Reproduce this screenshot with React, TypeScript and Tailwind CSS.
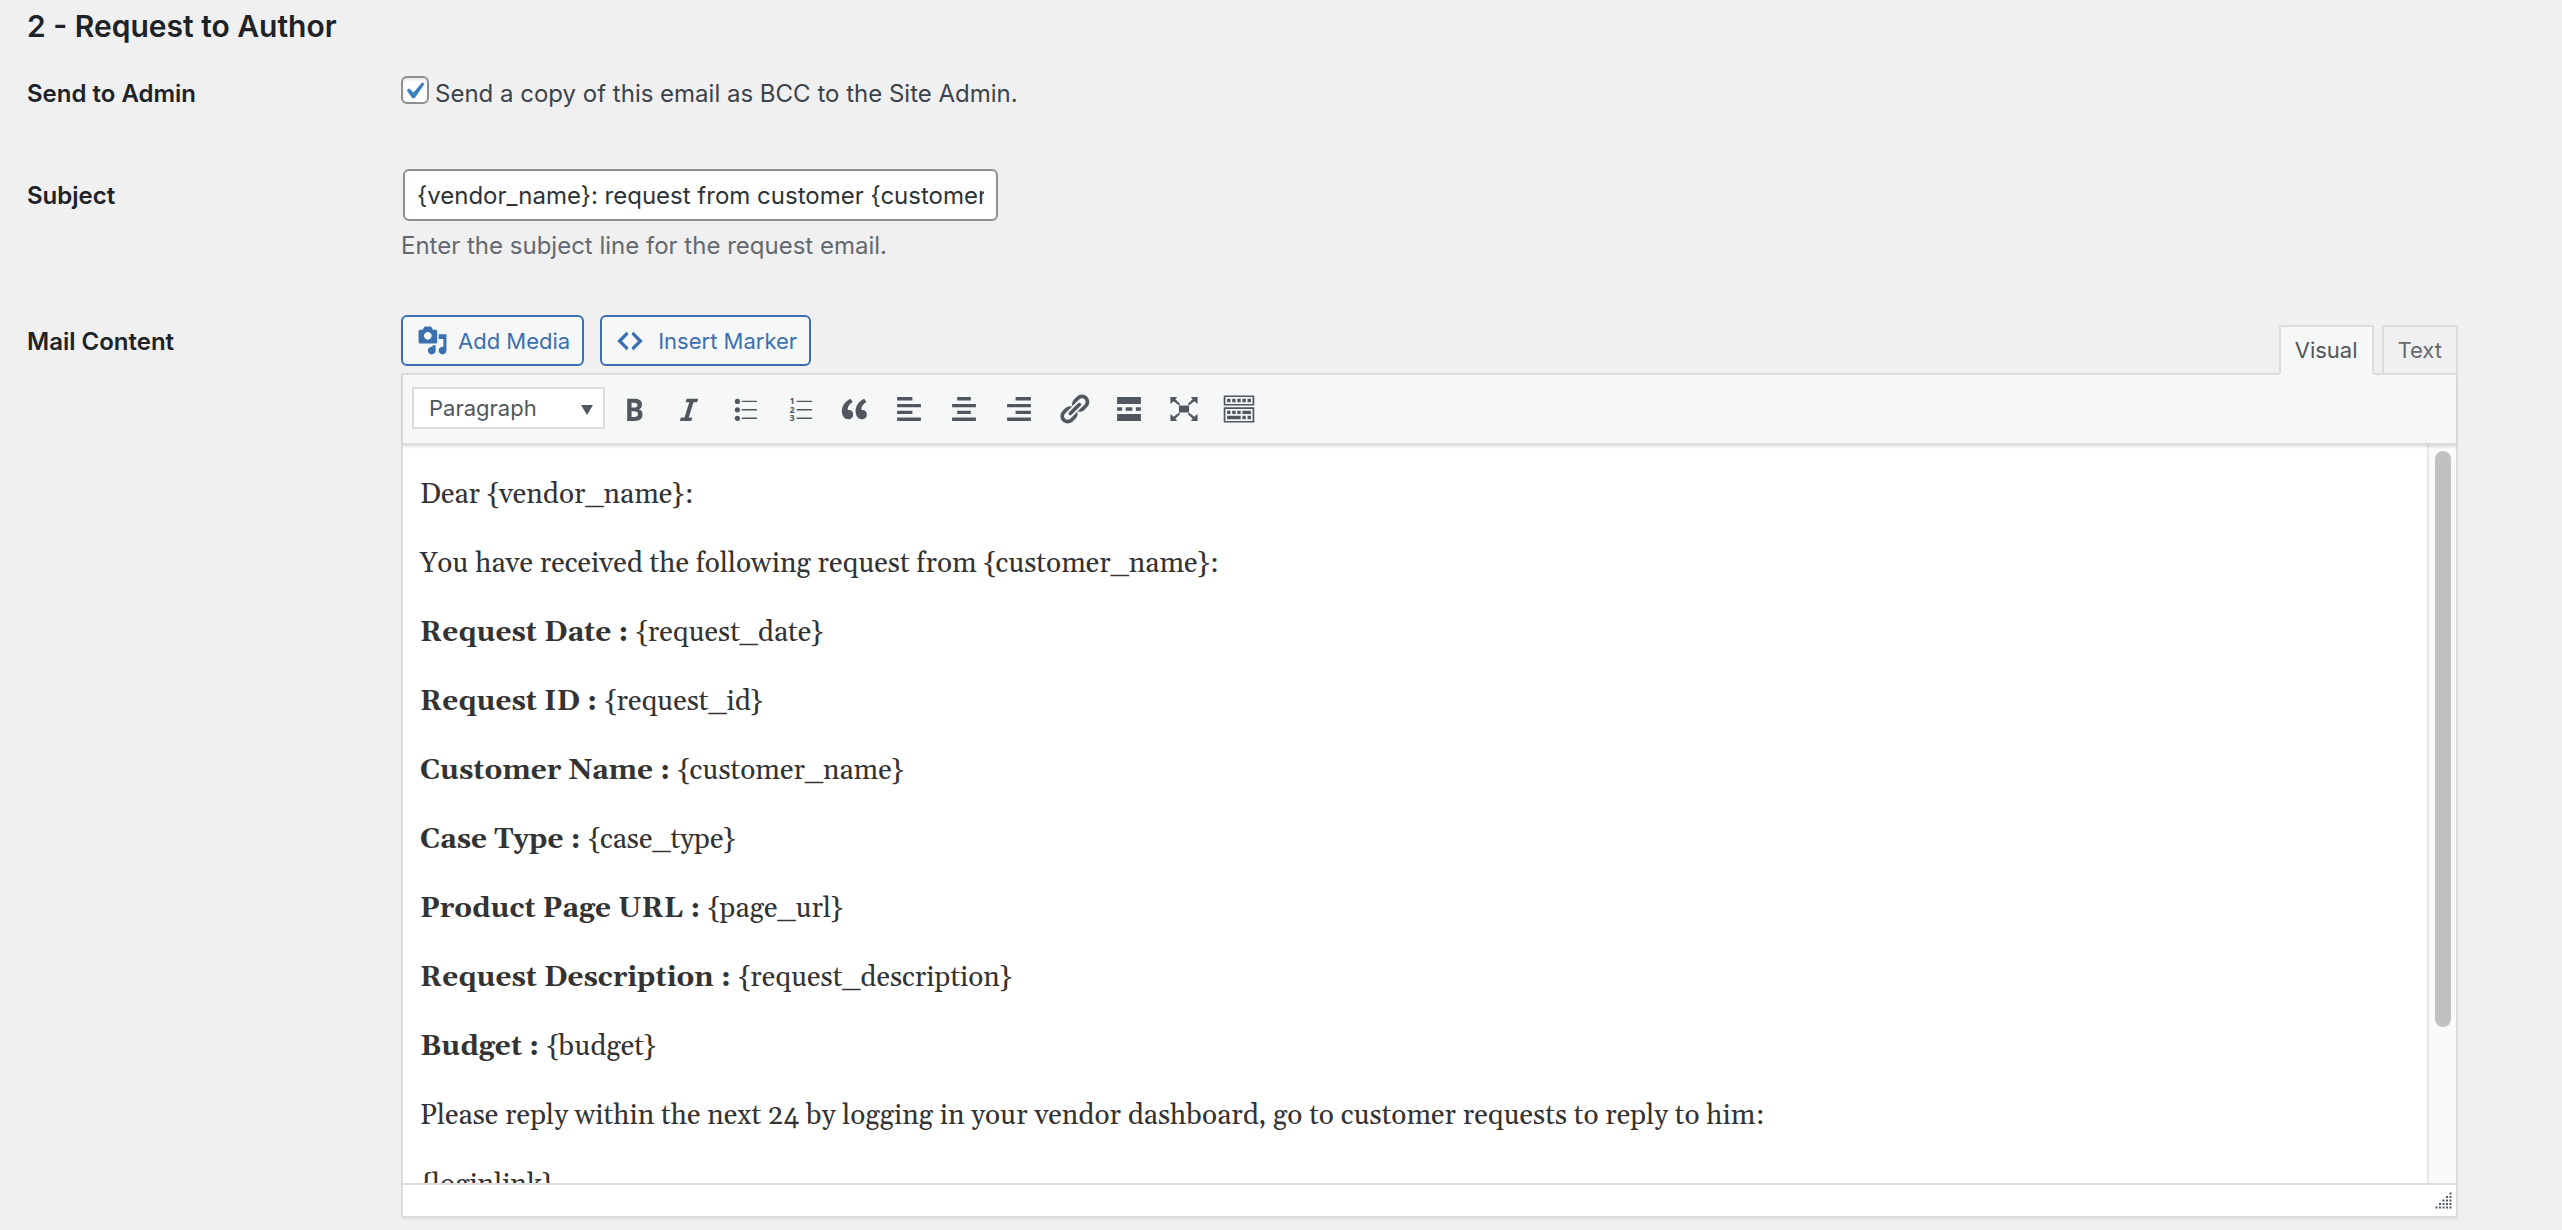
import React, { useState } from 'react';
import clsx from 'clsx';

interface IconProps {
    path: string;
    className?: string;
}

const Dashicon: React.FC<IconProps> = ({ path, className = 'size-[34px]' }) => (
    <svg viewBox="0 0 20 20" fill="currentColor" className={className} aria-hidden="true">
        <path d={path} />
    </svg>
);

const MEDIA = 'M13 11V4c0-.55-.45-1-1-1h-1.67L9 1H5L3.67 3H2c-.55 0-1 .45-1 1v7c0 .55.45 1 1 1h10c.55 0 1-.45 1-1zM7 4.5c1.38 0 2.5 1.12 2.5 2.5S8.38 9.5 7 9.5 4.5 8.38 4.5 7 5.62 4.5 7 4.5zM14 6h5v10.5c0 1.38-1.12 2.5-2.5 2.5S14 17.88 14 16.5s1.12-2.5 2.5-2.5c.17 0 .34.02.5.05V9h-3V6zm-4 8.05V13h2v3.5c0 1.38-1.12 2.5-2.5 2.5S7 17.88 7 16.5 8.12 14 9.5 14c.17 0 .34.02.5.05z';
const CODE = 'M9 6l-4 4 4 4-1 2-6-6 6-6zm2 8l4-4-4-4 1-2 6 6-6 6z';
const CHECK = 'M14.83 4.89l1.34.94-5.81 8.38H9.02L5.78 9.67l1.34-1.25 2.57 2.4z';

const BulletListIcon = () => (
    <svg viewBox="0 0 34 34" className="size-[34px]" fill="currentColor" aria-hidden="true">
        {[9.4, 17.8, 26.3].map((y) => (
            <g key={y}>
                <circle cx="10.4" cy={y} r="2.6" />
                <rect x="14.6" y={y - 0.7} width="15.6" height="1.4" rx="0.7" />
            </g>
        ))}
    </svg>
);

const NumberListIcon = () => (
    <svg viewBox="0 0 34 34" className="size-[34px]" fill="currentColor" aria-hidden="true">
        {[9.4, 17.8, 26.3].map((y, i) => (
            <g key={y}>
                <text x="7.6" y={y + 2.8} fontSize="9" fontWeight="700" fontFamily="Open Sans, sans-serif">{i + 1}</text>
                <rect x="14.6" y={y - 0.7} width="15.6" height="1.4" rx="0.7" />
            </g>
        ))}
    </svg>
);

const tools = [
    { label: 'Bold', icon: <Dashicon path="M6 4v13h4.54c1.37 0 2.46-.33 3.26-1 .8-.66 1.2-1.58 1.2-2.77 0-.84-.17-1.51-.51-2.01s-.9-.85-1.67-1.03v-.09c.57-.1 1.02-.4 1.36-.9s.51-1.13.51-1.91c0-1.14-.39-1.98-1.17-2.5C12.75 4.26 11.5 4 9.78 4H6zm2.57 5.15V6.26h1.36c.73 0 1.27.11 1.61.32.34.22.51.58.51 1.07 0 .54-.16.92-.47 1.15s-.82.35-1.51.35h-1.5zm0 2.19h1.6c1.44 0 2.16.53 2.16 1.61 0 .6-.17 1.05-.51 1.34s-.86.43-1.57.43H8.57v-3.38z" /> },
    { label: 'Italic', icon: <Dashicon path="M14.78 6h-2.13l-2.8 9h2.12l-.62 2H4.6l.62-2h2.14l2.8-9H8.03l.62-2h6.75z" /> },
    { label: 'Bulleted list', icon: <BulletListIcon /> },
    { label: 'Numbered list', icon: <NumberListIcon /> },
    { label: 'Blockquote', icon: <Dashicon path="M9.49 13.22c0-.74-.2-1.38-.61-1.9-.62-.78-1.83-.88-2.53-.72-.29-1.65 1.11-3.75 2.92-4.65L7.88 4c-2.73 1.3-5.42 4.28-4.96 8.05C3.21 14.43 4.59 16 6.54 16c.85 0 1.56-.25 2.12-.75s.83-1.18.83-2.03zm8.05 0c0-.74-.2-1.38-.61-1.9-.63-.78-1.83-.88-2.53-.72-.29-1.65 1.11-3.75 2.92-4.65L15.93 4c-2.73 1.3-5.41 4.28-4.95 8.05.29 2.38 1.66 3.95 3.61 3.95.85 0 1.56-.25 2.12-.75s.83-1.18.83-2.03z" /> },
    { label: 'Align left', icon: <Dashicon path="M12 5V3H3v2h9zm5 4V7H3v2h14zm-5 4v-2H3v2h9zm5 4v-2H3v2h14z" /> },
    { label: 'Align center', icon: <Dashicon path="M14 5V3H6v2h8zm3 4V7H3v2h14zm-3 4v-2H6v2h8zm3 4v-2H3v2h14z" /> },
    { label: 'Align right', icon: <Dashicon path="M17 5V3H8v2h9zm0 4V7H3v2h14zm0 4v-2H8v2h9zm0 4v-2H3v2h14z" /> },
    { label: 'Insert link', icon: <Dashicon path="M17.74 2.76c1.68 1.69 1.68 4.41 0 6.1l-1.53 1.52c-1.12 1.12-2.7 1.47-4.14 1.09l2.62-2.61.76-.77.76-.76c.84-.84.84-2.2 0-3.04-.84-.85-2.2-.85-3.04 0l-.77.76-3.38 3.38c-.37-1.44-.02-3.02 1.1-4.14l1.52-1.53c1.69-1.68 4.42-1.68 6.1 0zM8.59 13.43l5.34-5.34c.42-.42.42-1.1 0-1.52-.44-.43-1.13-.39-1.53 0l-5.33 5.34c-.42.42-.42 1.1 0 1.52.44.43 1.13.39 1.52 0zm-.76 2.29l4.14-4.15c.38 1.44.03 3.02-1.09 4.14l-1.52 1.53c-1.69 1.68-4.41 1.68-6.1 0-1.68-1.68-1.68-4.42 0-6.1l1.53-1.52c1.12-1.12 2.7-1.47 4.14-1.1l-4.14 4.15c-.85.84-.85 2.2 0 3.05.84.84 2.2.84 3.04 0z" /> },
    { label: 'Read more', icon: <Dashicon path="M17 7V3H3v4h14zM6 11V9H3v2h3zm6 0V9H8v2h4zm5 0V9h-3v2h3zm0 6v-4H3v4h14z" /> },
    { label: 'Fullscreen', icon: <Dashicon path="M7 8h6v4H7zM2 3h4L4.9 4.2 7.8 7 7 7.8 3.9 5.5 2 7zM18 3h-4l1.1 1.2L12.2 7l.8.8 3.1-2.3L18 7zM2 17h4l-1.1-1.2L7.8 13l-.8-.8-3.1 2.3L2 13zM18 17h-4l1.1-1.2-2.9-2.8.8-.8 3.1 2.3L18 13z" /> },
    { label: 'Toolbar toggle', icon: <Dashicon path="M19 2v6H1V2h18zm-1 5V3H2v4h16zM5 4v2H3V4h2zm3 0v2H6V4h2zm3 0v2H9V4h2zm3 0v2h-2V4h2zm3 0v2h-2V4h2zm2 5v9H1V9h18zm-1 8v-7H2v7h16zM5 11v2H3v-2h2zm3 0v2H6v-2h2zm3 0v2H9v-2h2zm6 0v2h-5v-2h5zm-6 3v2H3v-2h8zm3 0v2h-2v-2h2zm3 0v2h-2v-2h2z" /> },
];

const mailLines = [
    { text: 'Dear {vendor_name}:' },
    { text: 'You have received the following request from {customer_name}:' },
    { title: 'Request Date :', text: '{request_date}' },
    { title: 'Request ID :', text: '{request_id}' },
    { title: 'Customer Name :', text: '{customer_name}' },
    { title: 'Case Type :', text: '{case_type}' },
    { title: 'Product Page URL :', text: '{page_url}' },
    { title: 'Request Description :', text: '{request_description}' },
    { title: 'Budget :', text: '{budget}' },
    { text: 'Please reply within the next 24 by logging in your vendor dashboard, go to customer requests to reply to him:' },
    { text: '{loginlink}' },
];

// Dotted triangle in the status bar corner
const ResizeGrip = () => (
    <svg viewBox="0 0 17 17" className="size-[17px] text-[#50575e]" fill="currentColor" aria-hidden="true">
        {[0, 1, 2, 3, 4].map((row) =>
            Array.from({ length: row + 1 }, (_, i) => (
                <rect key={`${row}-${i}`} x={14.5 - i * 3.5} y={0.5 + row * 3.5} width="2" height="2" />
            ))
        )}
    </svg>
);

const MailEditor = () => {
    const [mode, setMode] = useState('Visual');

    return (
        <div className="text-[22px]">
            <div className="flex items-end justify-between">
                <div className="mb-[7px] flex gap-4">
                    <button className="flex h-[51px] items-center gap-2.5 rounded-md border-2 border-[#3b70b0] bg-[#f6f7f7] pr-3 pl-3.5 text-[#3b70b0]">
                        <Dashicon path={MEDIA} className="size-[31px]" />
                        Add Media
                    </button>
                    <button className="flex h-[51px] items-center gap-3 rounded-md border-2 border-[#3b70b0] bg-[#f6f7f7] px-3 text-[#3b70b0]">
                        <Dashicon path={CODE} className="size-[32px]" />
                        Insert Marker
                    </button>
                </div>
                <div className="relative -mb-0.5 flex gap-2">
                    {['Visual', 'Text'].map((tab) => (
                        <button
                            key={tab}
                            onClick={() => setMode(tab)}
                            className={clsx(
                                'h-[50px] border-2 border-[#dcdcde] px-3.5',
                                mode === tab ? 'border-b-[#f6f7f7] bg-[#f6f7f7] text-[#50575e]' : 'bg-[#f0f0f0] text-[#646970]'
                            )}
                        >
                            {tab}
                        </button>
                    ))}
                </div>
            </div>

            <div className="border-2 border-[#dcdcde] bg-white shadow-[0_2px_2px_rgba(0,0,0,0.04)]">
                <div className="relative flex h-[70px] items-center border-b-2 border-[#dcdcde] bg-[#f6f7f7] pl-[9px] shadow-[0_2px_2px_rgba(0,0,0,0.12)]">
                    <div className="relative mr-3 mb-0.5">
                        <select aria-label="Block format" className="block h-[42px] w-[193px] appearance-none border-2 border-[#dcdcde] bg-white pl-[15px] text-[#50575e]">
                            <option>Paragraph</option>
                            <option>Heading 1</option>
                            <option>Heading 2</option>
                        </select>
                        <svg viewBox="0 0 12 10" className="pointer-events-none absolute top-[18px] right-3 h-2.5 w-3 text-[#50575e]" fill="currentColor" aria-hidden="true">
                            <path d="M0 0h12L6 10z" />
                        </svg>
                    </div>
                    <div className="flex gap-[21px] text-[#50575e]">
                        {tools.map((tool) => (
                            <button key={tool.label} title={tool.label} aria-label={tool.label}>
                                {tool.icon}
                            </button>
                        ))}
                    </div>
                </div>

                <div className="flex h-[738px] overflow-hidden">
                    <div className="flex grow flex-col gap-7 px-[17px] pt-[30px] font-[Georgia,Gelasio,'Liberation_Serif',serif] text-[28px] leading-[41px] text-[#333333]">
                        {mailLines.map((line) => (
                            <p key={line.title ?? line.text}>
                                {line.title && <strong>{line.title} </strong>}
                                {line.text}
                            </p>
                        ))}
                    </div>
                    <div className="w-[29px] shrink-0 border-l-2 border-[#e8e8e8] bg-[#fafafa] px-1.5 pt-1.5">
                        <div className="h-[576px] w-4 rounded-full bg-[#c1c1c1]" />
                    </div>
                </div>

                <div className="flex h-[33px] items-center justify-end border-t-2 border-[#dcdcde] pr-1">
                    <ResizeGrip />
                </div>
            </div>
        </div>
    );
};

const App: React.FC = () => {
    const [sendCopy, setSendCopy] = useState(true);
    const [subject, setSubject] = useState('{vendor_name}: request from customer {customer_name}');

    return (
        <main className="min-h-screen bg-[#f0f0f0] pt-1.5 pr-[104px] pl-[27px] font-[Inter,sans-serif] text-[24px] leading-8 text-[#3c434a]">
            <h2 className="text-[30px] leading-10 font-semibold text-[#1d2327]">2 - Request to Author</h2>

            <div className="mt-8 grid grid-cols-[374px_1fr]">
                <div className="font-semibold text-[#1d2327]">Send to Admin</div>
                <label className="flex gap-1.5">
                    <span className="relative -mt-0.5 size-7">
                        <input
                            type="checkbox"
                            checked={sendCopy}
                            onChange={(e) => setSendCopy(e.target.checked)}
                            className="block size-7 appearance-none rounded-md border-2 border-[#8c8f94] bg-white shadow-[inset_0_2px_3px_rgba(0,0,0,0.1)]"
                        />
                        {sendCopy && <Dashicon path={CHECK} className="pointer-events-none absolute -top-0.5 -left-1 size-[34px] max-w-none text-[#3f7fc1]" />}
                    </span>
                    Send a copy of this email as BCC to the Site Admin.
                </label>
            </div>

            <div className="mt-[59px] grid grid-cols-[374px_1fr]">
                <label htmlFor="subject" className="pt-[11px] font-semibold text-[#1d2327]">Subject</label>
                <div>
                    <input
                        id="subject"
                        type="text"
                        value={subject}
                        onChange={(e) => setSubject(e.target.value)}
                        className="ml-0.5 block h-[52px] w-[595px] rounded-md border-2 border-[#8c8f94] bg-white px-3 text-[#2c3338]"
                    />
                    <p className="mt-[9px] text-[#646970]">Enter the subject line for the request email.</p>
                </div>
            </div>

            <div className="mt-[53px] grid grid-cols-[374px_1fr]">
                <div className="pt-[11px] font-semibold text-[#1d2327]">Mail Content</div>
                <MailEditor />
            </div>
        </main>
    );
};

export default App;
